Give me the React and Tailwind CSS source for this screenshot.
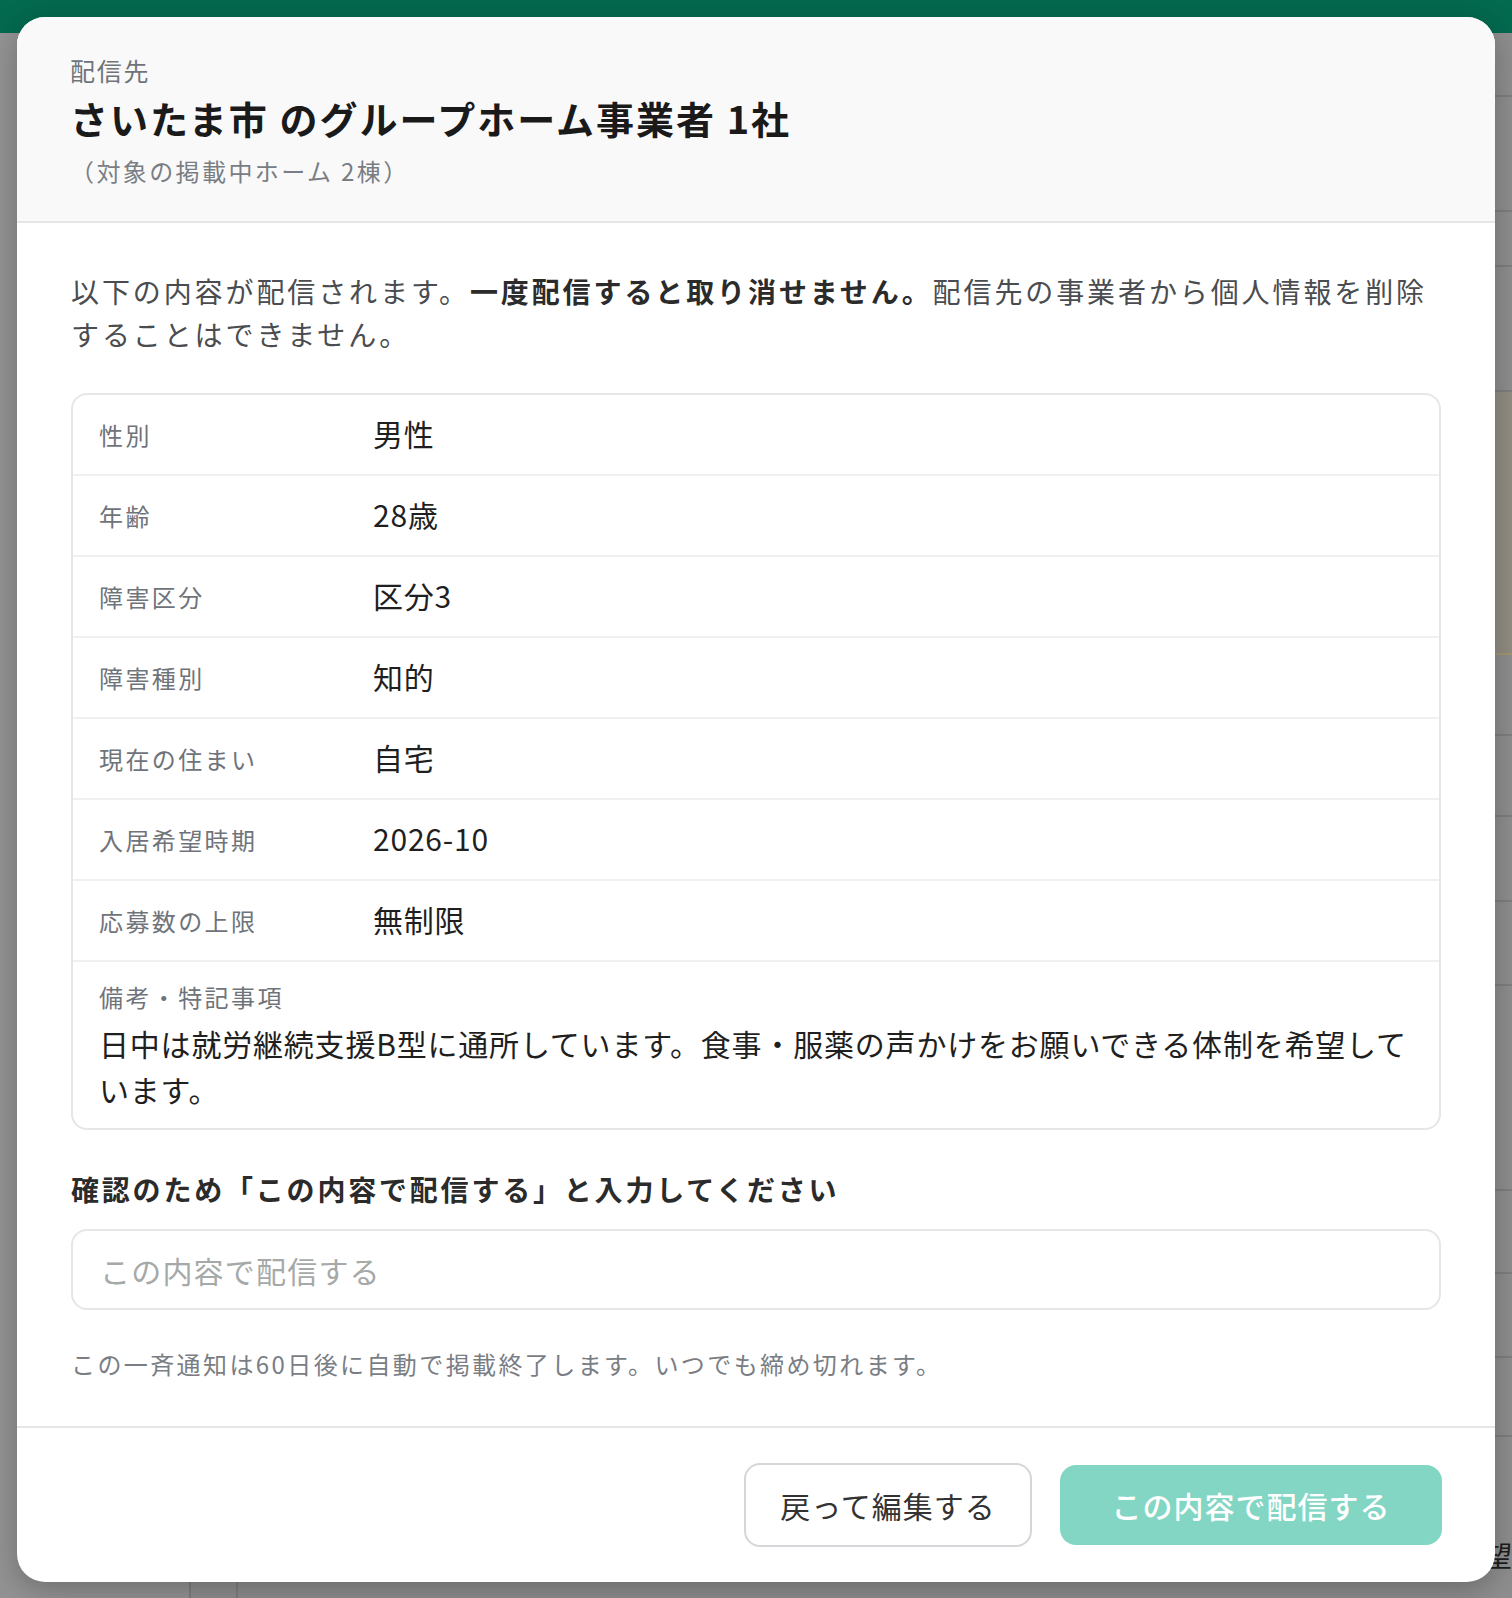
const rows = [
  { label: "性別", value: "男性" },
  { label: "年齢", value: "28歳" },
  { label: "障害区分", value: "区分3" },
  { label: "障害種別", value: "知的" },
  { label: "現在の住まい", value: "自宅" },
  { label: "入居希望時期", value: "2026-10" },
  { label: "応募数の上限", value: "無制限" },
]

const bgRows = [64, 115, 55, 125]
const bgRowsAfter = [81, 81, 85, 84, 205, 83, 84, 79]

function PageBehind() {
  return (
    <div className="absolute inset-0 flex flex-col">
      <div className="h-[33px] bg-[#03694f]" />
      <div className="flex flex-1 bg-[#8e8e8e]">
        <div className="w-[193px] border-r-2 border-[#7e7e7e] bg-[#939393]" />
        <div className="w-[47px] border-r-2 border-[#7e7e7e]" />
        <div className="flex flex-1 flex-col">
          {bgRows.map((h, i) => (
            <div key={i} className="border-b-2 border-[#7e7e7e]" style={{ height: h }} />
          ))}
          <div className="h-[263px] border-b-2 border-[#a2976f] bg-[#918d83]" />
          {bgRowsAfter.map((h, i) => (
            <div key={i} className="border-b-2 border-[#7e7e7e]" style={{ height: h }} />
          ))}
          <p className="whitespace-nowrap pl-[1246px] pt-[100px] text-[28px] leading-[36px] text-[#1c1c1c]">望</p>
        </div>
      </div>
    </div>
  )
}

export default function App() {
  return (
    <div className="relative h-[1598px] w-[1512px] overflow-hidden font-['Noto_Sans_CJK_JP','Noto_Sans',sans-serif]">
      <PageBehind />
      <div className="absolute left-[17px] top-[17px] flex h-[1565px] w-[1478px] flex-col overflow-hidden rounded-[28px] bg-white shadow-[0_8px_30px_rgba(0,0,0,0.25)]">
        <div className="border-b-2 border-[#e6e6e6] bg-[#f9f9f9] px-[53px] pt-[35px] pb-[32px]">
          <p className="text-[25px] leading-[36px] tracking-[1.8px] text-[#6f737a]">配信先</p>
          <h2 className="mt-[5px] text-[38px] font-bold leading-[50px] tracking-[2px] text-[#1a1a1a]">さいたま市 のグループホーム事業者 1社</h2>
          <p className="mt-[10px] text-[24px] leading-[36px] tracking-[2.4px] text-[#7a7e84]">（対象の掲載中ホーム 2棟）</p>
        </div>

        <div className="flex flex-1 flex-col px-[54px] pt-[47px]">
          <p className="text-[28px] leading-[43px] tracking-[2.9px] text-[#4a4c50]">
            以下の内容が配信されます。<span className="font-bold text-[#2b2b2b]">一度配信すると取り消せません。</span>配信先の事業者から個人情報を削除
            <br />
            することはできません。
          </p>

          <div className="mt-[37px] overflow-hidden rounded-[16px] border-2 border-[#e6e6e6]">
            {rows.map((r) => (
              <div key={r.label} className="flex h-[81px] items-center border-b-2 border-[#f0f0f0] px-[26px]">
                <span className="w-[274px] shrink-0 text-[24px] leading-[34px] tracking-[2.4px] text-[#6f737a]">{r.label}</span>
                <span className="-mt-[3px] text-[30px] leading-[40px] tracking-[0.8px] text-[#1f1f1f]">{r.value}</span>
              </div>
            ))}
            <div className="px-[26px] pt-[18px] pb-[16px]">
              <p className="text-[24px] leading-[34px] tracking-[2.4px] text-[#6f737a]">備考・特記事項</p>
              <p className="mt-[6px] text-[30px] leading-[46px] tracking-[0.8px] text-[#1f1f1f]">
                日中は就労継続支援B型に通所しています。食事・服薬の声かけをお願いできる体制を希望しています。
              </p>
            </div>
          </div>

          <label className="mt-[39px] text-[28px] font-bold leading-[40px] tracking-[2.8px] text-[#2b2b2b]">
            確認のため「この内容で配信する」と入力してください
          </label>
          <input
            className="mt-[20px] h-[81px] w-full rounded-[16px] border-2 border-[#e6e6e6] px-[27px] text-[30px] tracking-[1.2px] text-[#1f1f1f] outline-none placeholder:text-[#a5a9a8]"
            placeholder="この内容で配信する"
          />
          <p className="mt-[36px] text-[24px] leading-[36px] tracking-[2.4px] text-[#7a7e84]">
            この一斉通知は60日後に自動で掲載終了します。いつでも締め切れます。
          </p>
        </div>

        <div className="flex h-[156px] items-center justify-end gap-[28px] border-t-2 border-[#e6e6e6] px-[53px]">
          <button className="h-[84px] w-[288px] rounded-[16px] border-2 border-[#d6d6da] bg-white text-[30px] tracking-[1px] text-[#333333]">
            戻って編集する
          </button>
          <button className="h-[80px] w-[382px] rounded-[16px] bg-[#83d6c4] text-[30px] font-medium tracking-[1px] text-white">
            この内容で配信する
          </button>
        </div>
      </div>
    </div>
  )
}
